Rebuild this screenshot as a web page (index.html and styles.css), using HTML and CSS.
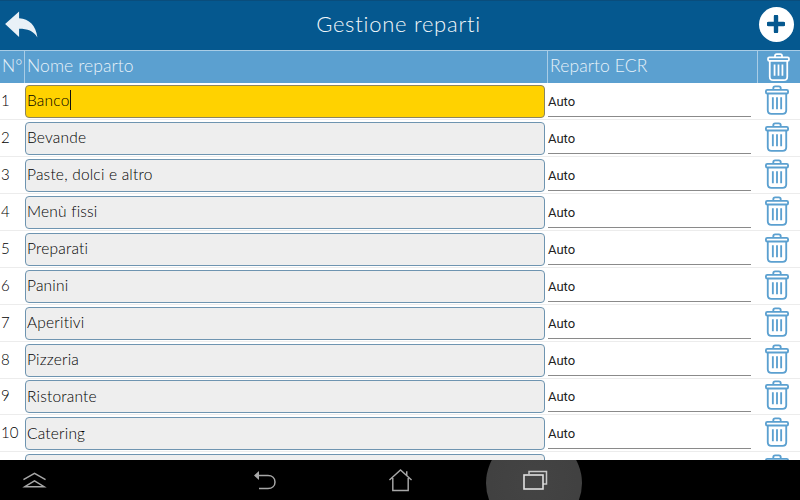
FILE: index.html
```html
<!DOCTYPE html>
<html lang="it">

<head>
    <meta charset="UTF-8">
    <title>Gestione reparti</title>
    <link rel="stylesheet" href="styles.css">
</head>

<body>
    <svg class="defs" width="0" height="0">
        <symbol id="trash" viewBox="0 0 26 32">
            <path d="M9 5V3.2C9 2 9.8 1.2 11 1.2H15C16.2 1.2 17 2 17 3.2V5" fill="none" stroke="currentColor" stroke-width="2"/>
            <rect x="1" y="5" width="24" height="4" rx="1.5" fill="none" stroke="currentColor" stroke-width="2"/>
            <path d="M3 9V27C3 29.4 4.6 31 7 31H19C21.4 31 23 29.4 23 27V9" fill="none" stroke="currentColor" stroke-width="2"/>
            <path d="M8.5 13V26M13 13V26M17.5 13V26" fill="none" stroke="currentColor" stroke-width="2"/>
        </symbol>
    </svg>

    <div class="app">
        <header class="topbar">
            <svg class="back" viewBox="0 0 34 28" width="33" height="27">
                <path d="M0 13.5L14.5 0.5V7.5C25 8 32 15 33.5 27.5C29 20.5 23.5 18.5 14.5 18.5V27Z" fill="#e9f1f7"/>
            </svg>
            <h1>Gestione reparti</h1>
            <div class="add">
                <svg viewBox="0 0 18 18" width="18" height="18">
                    <path d="M9 1.5V16.5M1.5 9H16.5" fill="none" stroke="#05588f" stroke-width="4.4" stroke-linecap="round"/>
                </svg>
            </div>
        </header>

        <div class="head">
            <div class="cell-n">N°</div>
            <div class="cell-name">Nome reparto</div>
            <div class="cell-ecr">Reparto ECR</div>
            <div class="cell-del"><svg class="bin-head"><use href="#trash"/></svg></div>
        </div>

        <div class="list">
            <div class="row">
                <div class="num">1</div>
                <div class="name active"><span class="caret">Banco</span></div>
                <div class="ecr">Auto</div>
                <svg class="bin"><use href="#trash"/></svg>
            </div>
            <div class="row">
                <div class="num">2</div>
                <div class="name">Bevande</div>
                <div class="ecr">Auto</div>
                <svg class="bin"><use href="#trash"/></svg>
            </div>
            <div class="row">
                <div class="num">3</div>
                <div class="name">Paste, dolci e altro</div>
                <div class="ecr">Auto</div>
                <svg class="bin"><use href="#trash"/></svg>
            </div>
            <div class="row">
                <div class="num">4</div>
                <div class="name">Menù fissi</div>
                <div class="ecr">Auto</div>
                <svg class="bin"><use href="#trash"/></svg>
            </div>
            <div class="row">
                <div class="num">5</div>
                <div class="name">Preparati</div>
                <div class="ecr">Auto</div>
                <svg class="bin"><use href="#trash"/></svg>
            </div>
            <div class="row">
                <div class="num">6</div>
                <div class="name">Panini</div>
                <div class="ecr">Auto</div>
                <svg class="bin"><use href="#trash"/></svg>
            </div>
            <div class="row">
                <div class="num">7</div>
                <div class="name">Aperitivi</div>
                <div class="ecr">Auto</div>
                <svg class="bin"><use href="#trash"/></svg>
            </div>
            <div class="row">
                <div class="num">8</div>
                <div class="name">Pizzeria</div>
                <div class="ecr">Auto</div>
                <svg class="bin"><use href="#trash"/></svg>
            </div>
            <div class="row">
                <div class="num">9</div>
                <div class="name">Ristorante</div>
                <div class="ecr">Auto</div>
                <svg class="bin"><use href="#trash"/></svg>
            </div>
            <div class="row">
                <div class="num">10</div>
                <div class="name">Catering</div>
                <div class="ecr">Auto</div>
                <svg class="bin"><use href="#trash"/></svg>
            </div>
            <div class="row">
                <div class="num"></div>
                <div class="name"></div>
                <div class="ecr"></div>
                <svg class="bin"><use href="#trash"/></svg>
            </div>
        </div>

        <nav class="navbar">
            <div class="nav-item">
                <svg viewBox="0 0 26 16" width="25" height="16">
                    <path d="M1.5 7.5L13 1L24.5 7.5M3 15L13 9L23 15Z" fill="none" stroke="#a8a8a8" stroke-width="1.5"/>
                </svg>
            </div>
            <div class="nav-item">
                <svg viewBox="0 0 24 22" width="24" height="22">
                    <path d="M2 6.5H15C19 6.5 22 9 22 13C22 17 19 19.5 15 19.5H6" fill="none" stroke="#a8a8a8" stroke-width="1.5"/>
                    <path d="M1 6.5L6 2V11Z" fill="#a8a8a8"/>
                </svg>
            </div>
            <div class="nav-item">
                <svg viewBox="0 0 26 24" width="25" height="24">
                    <path d="M1.5 12L13 1.5L24.5 12M5 10V23H21V10M19.5 3V7" fill="none" stroke="#a8a8a8" stroke-width="1.5"/>
                </svg>
            </div>
            <div class="glow"></div>
            <div class="nav-item recent">
                <svg viewBox="0 0 25 20" width="25" height="20">
                    <path d="M6 4V1.5H23.5V14H20" fill="none" stroke="#c8c8c8" stroke-width="1.5"/>
                    <rect x="1" y="5" width="19" height="14" fill="none" stroke="#e0e0e0" stroke-width="1.6"/>
                </svg>
            </div>
        </nav>
    </div>
</body>

</html>
```

FILE: styles.css
```css
* {
    box-sizing: border-box;
}
body {
    margin: 0;
    font-family: Lato, "Open Sans", sans-serif;
}
.defs {
    display: block;
    height: 0;
}
.app {
    width: 800px;
    height: 500px;
    display: flex;
    flex-direction: column;
    overflow: hidden;
    background-color: #fff;
}
.topbar {
    height: 50px;
    flex: none;
    display: flex;
    align-items: center;
    justify-content: space-between;
    padding: 0 6px 3px 5px;
    background-color: #05588f;
    border-top: 1px solid #0a4d7c;
}
.topbar h1 {
    margin: 0 0 1px;
    font-size: 22px;
    font-weight: 300;
    letter-spacing: .75px;
    color: #f2f7fa;
}
.add {
    width: 35px;
    height: 35px;
    border-radius: 50%;
    background-color: #fff;
    display: flex;
    align-items: center;
    justify-content: center;
}
.head {
    height: 33px;
    flex: none;
    display: grid;
    grid-template-columns: 24px 522px 209px 1fr;
    column-gap: 1px;
    background-color: #a9cde6;
    border-top: 1px solid #a9cde6;
    color: #e8f2f9;
    font-size: 17.5px;
    font-weight: 300;
    letter-spacing: .1px;
}
.head div {
    display: flex;
    align-items: center;
    padding: 0 0 3px 2px;
    background-color: #5ba0d0;
}
.head .cell-del {
    justify-content: center;
    padding: 0 2px 0 0;
}
.bin-head {
    width: 23px;
    height: 28px;
    color: #fff;
}
.list {
    flex: 1;
    overflow: hidden;
}
.row {
    height: 36.95px;
    display: grid;
    grid-template-columns: 25px 522px 209px 1fr;
    align-items: center;
    border-bottom: 1px solid #ececec;
}
.num {
    padding: 0 0 2px 1px;
    font-size: 15px;
    color: #000;
    font-weight: 300;
}
.name {
    height: 33px;
    margin-top: 1px;
    margin-right: 2px;
    padding: 0 0 2px 1px;
    display: flex;
    align-items: center;
    font-size: 15.5px;
    font-weight: 300;
    letter-spacing: .2px;
    color: #000;
    background-color: #eeeeee;
    border: 1px solid #6e94b0;
    border-radius: 4px;
}
.name.active {
    background-color: #ffd200;
    border-color: #8a8560;
}
.caret {
    border-right: 1px solid #111;
    line-height: 20px;
}
.ecr {
    height: 33px;
    margin: -1px 5px 0 1px;
    padding-top: 10px;
    font-family: Roboto, sans-serif;
    font-size: 13px;
    color: #222;
    border-bottom: 1px solid #8a8a8a;
}
.bin {
    width: 24px;
    height: 30px;
    color: #5ba0d0;
    margin: -2px 0 0 9px;
}
.navbar {
    height: 40px;
    flex: none;
    position: relative;
    background-color: #000;
    overflow: hidden;
}
.nav-item {
    position: absolute;
    top: 0;
    height: 40px;
    width: 40px;
    display: flex;
    align-items: center;
    justify-content: center;
}
.nav-item:nth-child(1) {
    left: 14px;
}
.nav-item:nth-child(2) {
    left: 245px;
}
.nav-item:nth-child(3) {
    left: 380px;
}
.nav-item.recent {
    left: 515px;
}
/* alone del tasto premuto */
.glow {
    position: absolute;
    left: 486px;
    top: -25px;
    width: 96px;
    height: 96px;
    border-radius: 50%;
    background: radial-gradient(circle, #444 0, #404040 86%, #000 100%);
}
```
